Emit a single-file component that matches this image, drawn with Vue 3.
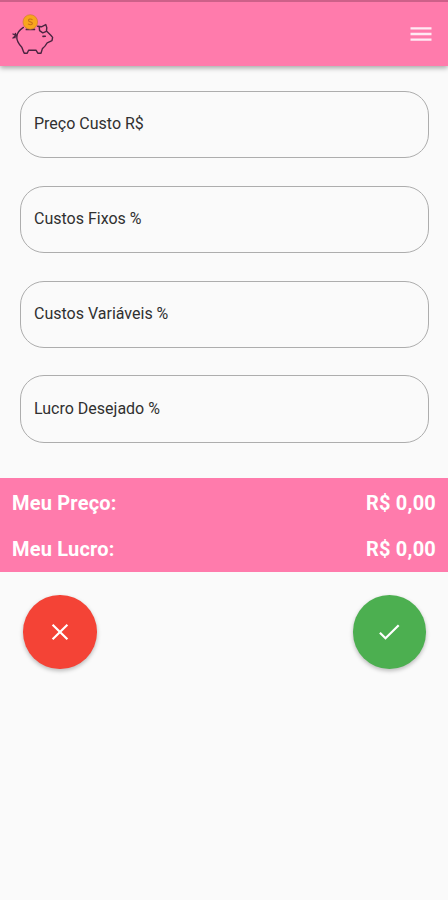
<script setup>
import { reactive } from 'vue'

const fields = reactive([
  { id: 'custo', label: 'Preço Custo R$' },
  { id: 'fixos', label: 'Custos Fixos %' },
  { id: 'variaveis', label: 'Custos Variáveis %' },
  { id: 'lucro', label: 'Lucro Desejado %' },
])
const results = reactive([
  { label: 'Meu Preço:', value: 'R$ 0,00' },
  { label: 'Meu Lucro:', value: 'R$ 0,00' },
])
</script>

<template>
  <div class="screen">
    <header class="bar">
      <svg class="pig" viewBox="0 0 48 48" width="48" height="48" aria-hidden="true">
        <g fill="none" stroke="#4a2440" stroke-width="1.4" stroke-linejoin="round" stroke-linecap="round">
          <path d="M15.4 19.4C11.8 21.8 9.2 24.6 8.8 28.2C8.4 32.4 10.6 36 13.8 39.2C14.6 41.4 15.2 43.4 16.2 45.2H19.2L20.6 42.2H28L29.8 45.2H33L34.4 40.6C36.6 39 38 37.2 39.2 34.8L44 32.6L44.6 29.4L42.8 27.2L39 23.6"/>
          <path d="M29.6 18.2L33.4 18.8L37.8 16.6L38.8 19.6L38.4 23.4L34.8 24.8L31.6 22.6L31.2 18.6"/>
          <path d="M18.4 21.4H26.4" stroke-width="1.7"/>
          <path d="M8.8 28L5 26M8.4 27L5 30M7.4 25.4L7 29.8" stroke-width="1.4"/>
          <path d="M35 28.4L37.3 28.2" stroke-width="1.6"/>
        </g>
        <circle cx="22.3" cy="14" r="7.3" fill="#f8a51c" stroke="#d07a35" stroke-width=".7"/>
        <path d="M24.6 11.9C22.4 10.4 20.2 11 20.5 12.6C20.8 14.2 24.6 13.6 24.4 15.5C24.2 17.1 21.8 17.2 20 15.9" fill="none" stroke="#c9701c" stroke-width="1.1"/>
      </svg>
      <svg class="menu" viewBox="0 0 28 28" width="28" height="28" aria-hidden="true">
        <path d="M3.5 8.4H24.5M3.5 14H24.5M3.5 19.6H24.5" stroke="#ffeaf3" stroke-width="2.4"/>
      </svg>
    </header>

    <main>
      <section class="fields">
        <div v-for="field in fields" :key="field.id" class="field">{{ field.label }}</div>
      </section>

      <section class="results">
        <div v-for="row in results" :key="row.label" class="result">
          <span>{{ row.label }}</span><span>{{ row.value }}</span>
        </div>
      </section>

      <section class="actions">
        <button class="action clear" aria-label="Limpar">
          <svg viewBox="0 0 28 28" width="28" height="28"><path d="M6.6 6.8L21.4 21.2M21.4 6.8L6.6 21.2" fill="none" stroke="#fff" stroke-width="2.2"/></svg>
        </button>
        <button class="action confirm" aria-label="Calcular">
          <svg viewBox="0 0 28 28" width="28" height="28"><path d="M4.9 14.8L10.5 20.3L23.7 7.3" fill="none" stroke="#fff" stroke-width="2.2"/></svg>
        </button>
      </section>
    </main>
  </div>
</template>

<style>
body { margin: 0; background: #fafafa; }
</style>

<style scoped>
.screen {
  box-sizing: border-box;
  width: 100%;
  height: 900px;
  overflow: hidden;
  background: #fafafa;
  font-family: Roboto, "Liberation Sans", sans-serif;
}
.bar {
  box-sizing: border-box;
  display: flex;
  justify-content: space-between;
  height: 66px;
  padding: 8px 13px 0 8px;
  border-top: 2px solid #cd6089;
  background: #ff7bac;
  box-shadow: 0 2px 5px rgba(0, 0, 0, .34);
}
.pig { margin-top: -2px; }
.menu { margin-top: 10px; }
.fields {
  display: grid;
  grid-auto-rows: 67.2px;
  row-gap: 27.6px;
  padding: 25px 19px 0 20px;
}
.field {
  box-sizing: border-box;
  display: flex;
  align-items: center;
  padding: 0 13px 1.6px;
  border: 1px solid #adadad;
  border-radius: 24px;
  color: #303030;
  font-size: 16px;
}
.results {
  box-sizing: border-box;
  height: 94px;
  margin-top: 35.8px;
  padding: 1px 12px 0;
  background: #ff7bac;
}
.result {
  display: flex;
  align-items: center;
  justify-content: space-between;
  height: 46.7px;
  color: #fff;
  font-size: 20px;
  font-weight: 700;
  letter-spacing: .2px;
}
.actions {
  display: flex;
  justify-content: space-between;
  padding: 23px 22px 0 23px;
}
.action {
  display: flex;
  align-items: center;
  justify-content: center;
  width: 73.5px;
  height: 73.5px;
  padding: 0;
  border: 0;
  border-radius: 50%;
  box-shadow: 0 2px 4px rgba(0, 0, 0, .26);
}
.clear { background: #f44336; }
.confirm { background: #4caf50; }
</style>
